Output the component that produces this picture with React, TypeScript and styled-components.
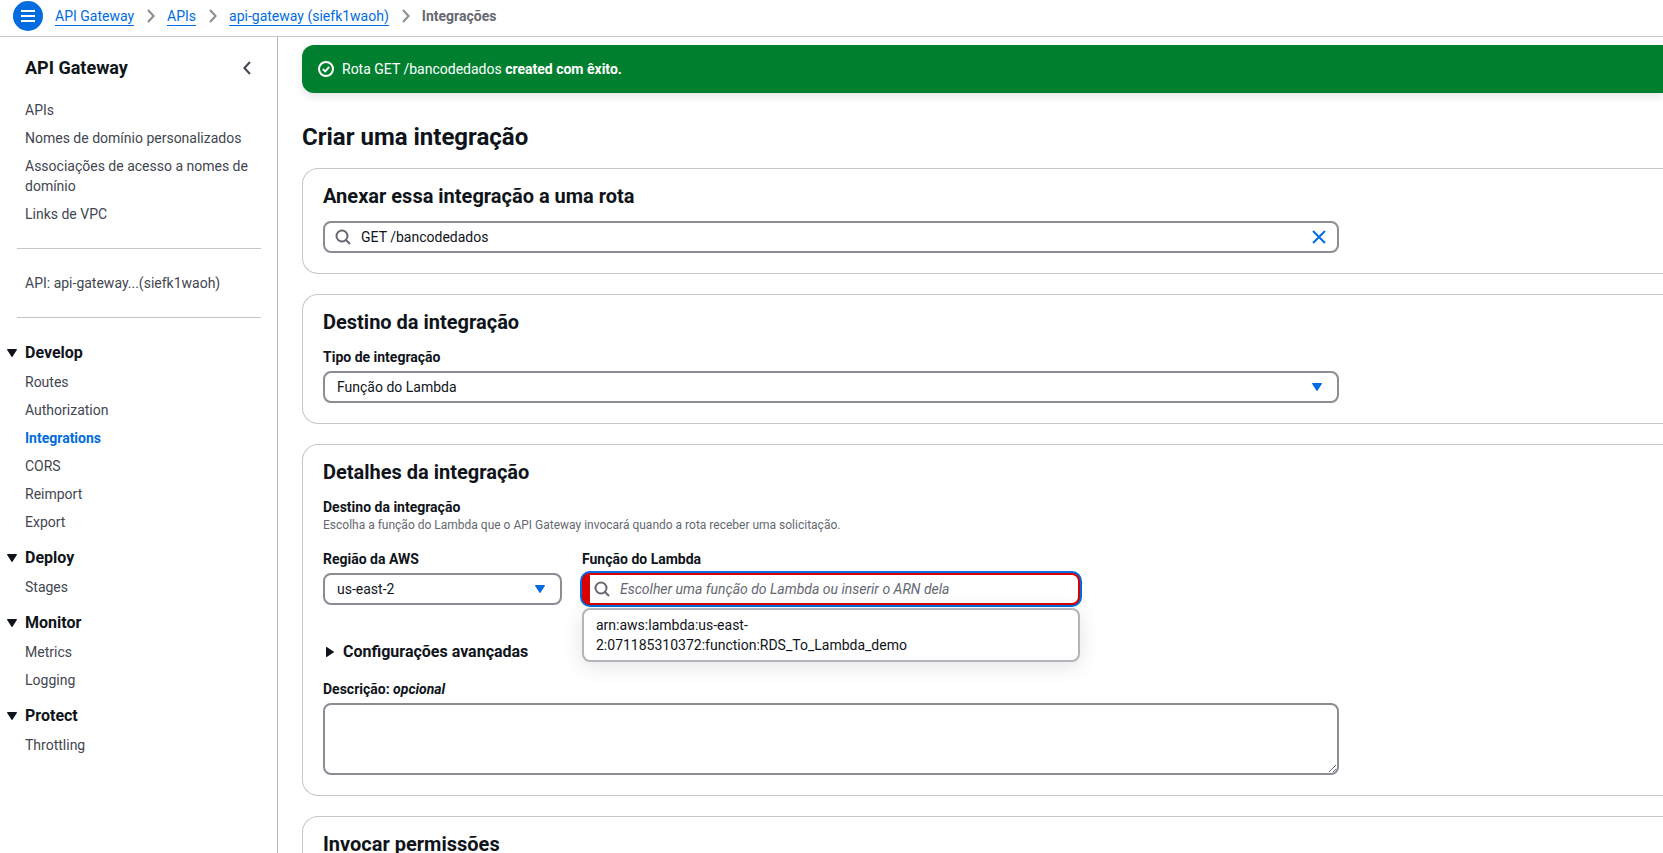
import React from "react";
import styled, { createGlobalStyle, css } from "styled-components";

const color = {
  blue: "#006ce0",
  text: "#0f141a",
  body: "#424650",
  muted: "#656871",
  border: "#8c8c94",
  line: "#c6c6cd",
  green: "#00802f",
  red: "#db0000",
};

const GlobalStyle = createGlobalStyle`
  *, *::before, *::after { box-sizing: border-box; }
  body {
    margin: 0;
    background: #fff;
    color: ${color.text};
    font-family: Roboto, "Open Sans", sans-serif;
    font-size: 14px;
    line-height: 20px;
  }
  button, input, select, textarea { font: inherit; color: inherit; }
`;

const Shell = styled.div`
  display: flex;
  flex-direction: column;
  height: 100vh;
  overflow: hidden;
`;

const TopBar = styled.header`
  display: flex;
  align-items: flex-start;
  gap: 12px;
  flex: none;
  height: 37px;
  padding: 1px 13px 0;
  border-bottom: 1px solid ${color.line};
`;

const MenuButton = styled.button`
  display: grid;
  place-items: center;
  width: 30px;
  height: 30px;
  padding: 0;
  border: 0;
  border-radius: 50%;
  background: ${color.blue};
  color: #fff;
`;

const Crumbs = styled.ol`
  display: flex;
  align-items: center;
  margin: 0;
  padding: 5px 0 0;
  list-style: none;

  li {
    display: flex;
    align-items: center;
    height: 20px;
  }
  svg {
    margin: 0 12px 0 13px;
    color: ${color.border};
  }
`;

const CrumbLink = styled.a`
  height: 20px;
  border-bottom: 1px solid ${color.blue};
  color: ${color.blue};
  text-decoration: none;
`;

const CurrentCrumb = styled.span`
  color: ${color.muted};
  font-weight: 700;
`;

const Body = styled.div`
  display: flex;
  flex: 1;
  min-height: 0;
`;

const Sidebar = styled.nav`
  flex: none;
  width: 278px;
  padding: 19px 16px 0 17px;
  border-right: 1px solid #b4b4bb;
  overflow: hidden;
`;

const SideHeader = styled.div`
  display: flex;
  justify-content: space-between;
  align-items: center;
  padding: 0 10px 0 8px;
`;

const SideTitle = styled.h2`
  margin: 0;
  font-size: 18px;
  line-height: 24px;
`;

const IconButton = styled.button`
  display: grid;
  place-items: center;
  padding: 0;
  border: 0;
  background: none;
  color: ${(p) => p.color || color.body};
`;

const NavList = styled.ul<{ $top?: number }>`
  display: flex;
  flex-direction: column;
  gap: 8px;
  margin: ${(p) => p.$top ?? 8}px 0 0;
  padding: 0 8px;
  list-style: none;
`;

const NavLink = styled.a<{ $active?: boolean }>`
  display: block;
  color: ${(p) => (p.$active ? color.blue : color.body)};
  font-weight: ${(p) => (p.$active ? 700 : 400)};
  text-decoration: none;
`;

const Divider = styled.hr`
  width: 100%;
  margin: 24px 0;
  border: 0;
  border-top: 1px solid ${color.line};
`;

const NavSection = styled.section`
  & + & { margin-top: 15px; }
`;

const SectionToggle = styled.button`
  display: flex;
  align-items: center;
  gap: 8px;
  margin-left: -10px;
  padding: 0;
  border: 0;
  background: none;
  font-size: 16px;
  font-weight: 700;
  line-height: 22px;
`;

const Main = styled.main`
  flex: 1;
  min-width: 0;
  padding: 8px 0 24px 24px;
  overflow: hidden auto;
  scrollbar-width: none;
`;

const Flash = styled.div`
  display: flex;
  align-items: center;
  gap: 8px;
  padding: 14px 16px;
  border-radius: 12px 0 0 12px;
  background: ${color.green};
  box-shadow: 0 4px 8px rgba(0, 7, 22, 0.1);
  color: #fff;
`;

const PageTitle = styled.h1`
  margin: 29px 0 16px;
  font-size: 24px;
  line-height: 30px;
`;

const Cards = styled.div`
  display: flex;
  flex-direction: column;
  gap: 20px;
`;

const Card = styled.section`
  padding: 15px 20px 20px;
  border: 1px solid ${color.line};
  border-right: 0;
  border-radius: 16px 0 0 16px;
`;

const CardTitle = styled.h2`
  margin: 0 0 13px;
  font-size: 20px;
  line-height: 24px;
`;

const FormColumn = styled.div`
  max-width: 1016px;
`;

const FormRow = styled.div`
  display: grid;
  grid-template-columns: repeat(4, minmax(0, 1fr));
  gap: 20px;
`;

const FormCell = styled.div<{ $span?: number }>`
  grid-column: span ${(p) => p.$span ?? 1};
`;

const Label = styled.label`
  display: block;
  margin-bottom: 4px;
  font-weight: 700;
`;

const GroupLabel = styled.h3`
  margin: 0;
  font-size: 14px;
  line-height: 20px;
`;

const Hint = styled.p`
  margin: 0 0 16px;
  color: ${color.muted};
  font-size: 12px;
  line-height: 16px;
`;

const fieldFrame = css`
  width: 100%;
  border: 2px solid ${color.border};
  border-radius: 8px;
  background: #fff;
`;

const SearchBox = styled.div<{ $invalid?: boolean }>`
  ${fieldFrame}
  display: flex;
  align-items: center;
  gap: 10px;
  height: 32px;
  padding: 0 11px 0 10px;
  color: ${color.muted};
  ${(p) =>
    p.$invalid &&
    css`
      padding-left: 4px;
      border-color: ${color.red};
      border-left-width: 8px;
      box-shadow: 0 0 0 2px ${color.blue};
    `}

  input {
    flex: 1;
    min-width: 0;
    padding: 0;
    border: 0;
    outline: 0;
    background: none;
    color: ${color.text};
  }
  input::placeholder {
    color: ${color.muted};
    font-style: italic;
    opacity: 1;
  }
`;

const SelectBox = styled.div`
  display: grid;
  align-items: center;

  select, svg { grid-area: 1 / 1; }
  select {
    ${fieldFrame}
    height: 32px;
    padding: 0 36px 0 12px;
    appearance: none;
  }
  svg {
    justify-self: end;
    margin-right: 17px;
    color: ${color.blue};
    pointer-events: none;
  }
`;

const Combo = styled.div`
  position: relative;
`;

const Options = styled.ul`
  position: absolute;
  top: 35px;
  left: 0;
  right: 0;
  z-index: 1;
  margin: 0;
  padding: 5px 12px;
  border: 2px solid #b4b4bb;
  border-radius: 8px;
  background: #fff;
  box-shadow: 0 4px 20px 1px rgba(0, 7, 22, 0.1);
  list-style: none;
`;

const ExpandButton = styled.button`
  display: flex;
  align-items: center;
  gap: 9px;
  margin: 37px 0 17px;
  padding: 0 0 0 3px;
  border: 0;
  background: none;
  font-size: 16px;
  font-weight: 700;
  line-height: 20px;
`;

const TextArea = styled.textarea`
  ${fieldFrame}
  display: block;
  height: 72px;
  padding: 4px 12px;
  resize: vertical;
`;

const Chevron = () => (
  <svg width="8" height="14" viewBox="0 0 8 14" fill="none" stroke="currentColor" strokeWidth="2">
    <path d="M1 1l5.6 6L1 13" />
  </svg>
);

const CaretDown = () => (
  <svg width="10" height="8" viewBox="0 0 10 8" fill="currentColor">
    <path d="M.7 0h8.6c.6 0 .9.6.5 1.1L5.6 7.6a.7.7 0 0 1-1.2 0L.2 1.1C-.2.6.1 0 .7 0z" />
  </svg>
);

const CaretRight = () => (
  <svg width="8" height="10" viewBox="0 0 8 10" fill="currentColor">
    <path d="M0 .7v8.6c0 .6.6.9 1.1.5l6.5-4.2a.7.7 0 0 0 0-1.2L1.1.2C.6-.2 0 .1 0 .7z" />
  </svg>
);

const SearchIcon = () => (
  <svg width="16" height="16" viewBox="0 0 16 16" fill="none" stroke="currentColor" strokeWidth="2">
    <circle cx="7" cy="7" r="5.5" />
    <path d="M11 11l4 4" />
  </svg>
);

const SuccessIcon = () => (
  <svg width="16" height="16" viewBox="0 0 16 16" fill="none" stroke="currentColor" strokeWidth="2">
    <circle cx="8" cy="8" r="7" />
    <path d="M4.8 8l2.4 2.4 4-4.6" />
  </svg>
);

const Arrow = () => (
  <svg width="8" height="14" viewBox="0 0 8 14" fill="none" stroke="currentColor" strokeWidth="2">
    <path d="M7 1L1.4 7 7 13" />
  </svg>
);

const crumbs = ["API Gateway", "APIs", "api-gateway (siefk1waoh)"];

const topLinks = [
  "APIs",
  "Nomes de domínio personalizados",
  "Associações de acesso a nomes de domínio",
  "Links de VPC",
];

const sections = [
  { title: "Develop", items: ["Routes", "Authorization", "Integrations", "CORS", "Reimport", "Export"] },
  { title: "Deploy", items: ["Stages"] },
  { title: "Monitor", items: ["Metrics", "Logging"] },
  { title: "Protect", items: ["Throttling"] },
];

export default function App() {
  return (
    <Shell>
      <GlobalStyle />
      <TopBar>
        <MenuButton aria-label="Menu">
          <svg width="14" height="12" viewBox="0 0 14 12" stroke="currentColor" strokeWidth="2">
            <path d="M0 1h14M0 6h14M0 11h14" />
          </svg>
        </MenuButton>
        <Crumbs>
          {crumbs.map((c) => (
            <li key={c}>
              <CrumbLink href="#">{c}</CrumbLink>
              <Chevron />
            </li>
          ))}
          <li>
            <CurrentCrumb>Integrações</CurrentCrumb>
          </li>
        </Crumbs>
      </TopBar>
      <Body>
        <Sidebar>
          <SideHeader>
            <SideTitle>API Gateway</SideTitle>
            <IconButton aria-label="Fechar navegação">
              <Arrow />
            </IconButton>
          </SideHeader>
          <NavList $top={20}>
            {topLinks.map((t) => (
              <li key={t}>
                <NavLink href="#">{t}</NavLink>
              </li>
            ))}
          </NavList>
          <Divider />
          <NavList $top={0}>
            <li>
              <NavLink href="#">API: api-gateway...(siefk1waoh)</NavLink>
            </li>
          </NavList>
          <Divider />
          {sections.map((s) => (
            <NavSection key={s.title}>
              <SectionToggle aria-expanded="true">
                <CaretDown />
                {s.title}
              </SectionToggle>
              <NavList>
                {s.items.map((item) => (
                  <li key={item}>
                    <NavLink href="#" $active={item === "Integrations"}>
                      {item}
                    </NavLink>
                  </li>
                ))}
              </NavList>
            </NavSection>
          ))}
        </Sidebar>
        <Main>
          <Flash role="status">
            <SuccessIcon />
            <span>
              Rota GET /bancodedados <b>created com êxito.</b>
            </span>
          </Flash>
          <PageTitle>Criar uma integração</PageTitle>
          <Cards>
            <Card>
              <CardTitle>Anexar essa integração a uma rota</CardTitle>
              <FormColumn>
                <SearchBox>
                  <SearchIcon />
                  <input aria-label="Rota" defaultValue="GET /bancodedados" />
                  <IconButton color={color.blue} aria-label="Limpar">
                    <svg width="14" height="14" viewBox="0 0 14 14" stroke="currentColor" strokeWidth="2">
                      <path d="M1 1l12 12M13 1L1 13" />
                    </svg>
                  </IconButton>
                </SearchBox>
              </FormColumn>
            </Card>
            <Card>
              <CardTitle>Destino da integração</CardTitle>
              <FormColumn>
                <Label htmlFor="type">Tipo de integração</Label>
                <SelectBox>
                  <select id="type">
                    <option>Função do Lambda</option>
                  </select>
                  <CaretDown />
                </SelectBox>
              </FormColumn>
            </Card>
            <Card>
              <CardTitle>Detalhes da integração</CardTitle>
              <FormColumn>
                <GroupLabel>Destino da integração</GroupLabel>
                <Hint>
                  Escolha a função do Lambda que o API Gateway invocará quando a rota receber uma solicitação.
                </Hint>
                <FormRow>
                  <FormCell>
                    <Label htmlFor="region">Região da AWS</Label>
                    <SelectBox>
                      <select id="region">
                        <option>us-east-2</option>
                      </select>
                      <CaretDown />
                    </SelectBox>
                  </FormCell>
                  <FormCell $span={2}>
                    <Label htmlFor="lambda">Função do Lambda</Label>
                    <Combo>
                      <SearchBox $invalid>
                        <SearchIcon />
                        <input
                          id="lambda"
                          aria-invalid="true"
                          placeholder="Escolher uma função do Lambda ou inserir o ARN dela"
                        />
                      </SearchBox>
                      <Options role="listbox">
                        <li role="option" aria-selected="false">
                          arn:aws:lambda:us-east-
                          <br />
                          2:071185310372:function:RDS_To_Lambda_demo
                        </li>
                      </Options>
                    </Combo>
                  </FormCell>
                </FormRow>
                <ExpandButton aria-expanded="false">
                  <CaretRight />
                  Configurações avançadas
                </ExpandButton>
                <Label htmlFor="description">
                  Descrição: <em>opcional</em>
                </Label>
                <TextArea id="description" />
              </FormColumn>
            </Card>
            <Card>
              <CardTitle>Invocar permissões</CardTitle>
            </Card>
          </Cards>
        </Main>
      </Body>
    </Shell>
  );
}
